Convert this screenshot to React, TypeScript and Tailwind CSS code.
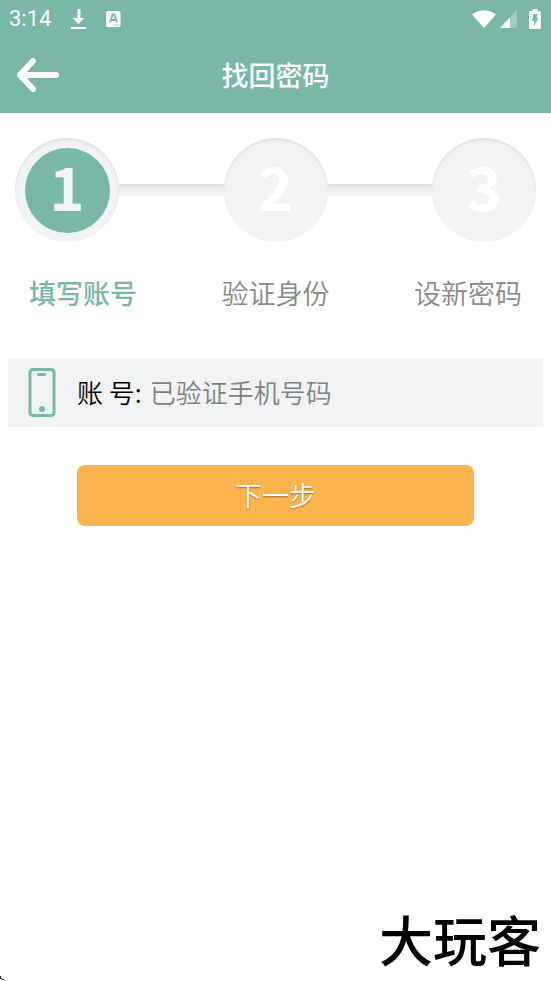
import React from "react";

const steps = [
  { number: 1, label: "填写账号" },
  { number: 2, label: "验证身份" },
  { number: 3, label: "设新密码" },
];

function StatusBar() {
  return (
    <div className="flex h-[38px] items-center justify-between pr-[10px] pl-[9px] text-white">
      <div className="flex items-center">
        <span className="w-[61px] font-[Roboto,sans-serif] text-[22px] leading-[38px]">3:14</span>
        <svg className="h-6 w-[18px]" viewBox="0 0 18 24" fill="currentColor" aria-hidden="true">
          <path d="M7.500 2h3v9h4l-6 6-6-6h5zM1 20h15v2H1z" />
        </svg>
        <svg className="ml-[18px] h-4 w-[15px]" viewBox="0 0 15 16" aria-hidden="true">
          <rect width="14.5" height="16" rx="1.5" fill="white" />
          <path d="M4 11.5 6.6 3.5h1.8L11 11.5M5 9h5" fill="none" stroke="#78b7a6" strokeWidth="1.8" />
          <path d="M7.5 14h6" stroke="#78b7a6" strokeWidth="1.2" strokeDasharray="1.5 1" />
        </svg>
      </div>
      <div className="flex items-center">
        <svg className="h-[19px] w-6" viewBox="0 0 24 19" fill="currentColor" aria-hidden="true">
          <path d="M0 4.500Q12-4 24 4.500L12 18z" />
        </svg>
        <svg className="ml-1 h-[18px] w-[17px]" viewBox="0 0 17 18" fill="currentColor" aria-hidden="true">
          <path d="M0 18 17 0v18z" opacity="0.3" />
          <path d="M0 18 10 7.4V18z" />
        </svg>
        <svg className="ml-3 h-5 w-3" viewBox="0 0 12 20" aria-hidden="true">
          <path d="M3.5 0h5v2H11q1 0 1 1v16q0 1-1 1H1q-1 0-1-1V3q0-1 1-1h2.500z" fill="white" />
          <path d="M4.500 5h4L7.500 9H9.500L4.500 17.500 5.500 12H3z" fill="#78b7a6" />
        </svg>
      </div>
    </div>
  );
}

function Header() {
  return (
    <header className="h-[113px] bg-[#78b7a6]">
      <StatusBar />
      <div className="grid h-[73px] grid-cols-[1fr_auto_1fr] items-center">
        <button type="button" aria-label="返回" className="ml-4 w-11 text-white">
          <svg className="h-9 w-11" viewBox="0 0 44 36" fill="none" stroke="currentColor" strokeWidth="6" strokeLinecap="round" strokeLinejoin="round" aria-hidden="true">
            <path d="M17 4 4 18l13 14M4 18h36" />
          </svg>
        </button>
        <h1 className="text-[27px] leading-10 font-medium text-white">找回密码</h1>
      </div>
    </header>
  );
}

function Steps() {
  return (
    <section>
      <div className="mt-[25px] flex items-center px-[15px]">
        {steps.map(({ number }, i) => (
          <React.Fragment key={number}>
            {i > 0 && (
              <div className="h-3 flex-1 bg-[#f1f3f5] shadow-[inset_0_3px_2px_#e0e2e4]" />
            )}
            <div className="flex size-[104px] shrink-0 items-center justify-center rounded-full bg-[#f1f3f5] shadow-[inset_0_2px_3px_#dedfe1]">
              <div
                className={
                  "flex size-[85px] items-center justify-center rounded-full pb-[10px] text-[60px] leading-none font-bold " +
                  (i === 0 ? "bg-[#78b7a6] text-[#f1f3f5]" : "text-white")
                }
              >
                {number}
              </div>
            </div>
          </React.Fragment>
        ))}
      </div>
      <div className="mt-8 flex justify-between px-[29px] text-[27px] leading-[38px] text-[#888888]">
        {steps.map(({ number, label }, i) => (
          <span key={number} className={i === 0 ? "font-medium text-[#78b7a6]" : "font-[350]"}>
            {label}
          </span>
        ))}
      </div>
    </section>
  );
}

function PhoneIcon() {
  return (
    <svg className="h-[49px] w-7 shrink-0" viewBox="0 0 28 49" fill="none" stroke="#78b7a6" strokeWidth="3" strokeLinecap="round" aria-hidden="true">
      <rect x="2" y="1.500" width="24" height="46" rx="3" />
      <path d="M10.500 6.500h6" />
      <circle cx="14" cy="41" r="3" fill="#78b7a6" stroke="none" />
    </svg>
  );
}

export default function App() {
  return (
    <div className="relative flex min-h-screen flex-col bg-white font-['Noto_Sans_CJK_SC',sans-serif]">
      <Header />
      <Steps />
      <form onSubmit={(e) => e.preventDefault()}>
        <div className="mx-2 mt-[46px] flex h-[69px] items-center bg-[#f1f3f5] pl-5 text-[26px]">
          <PhoneIcon />
          <label htmlFor="account" className="ml-[21px] shrink-0 pb-[2px] font-[350] text-black">
            账 号:
          </label>
          <input
            id="account"
            type="text"
            placeholder="已验证手机号码"
            className="ml-2 h-full min-w-0 flex-1 bg-transparent pb-[2px] font-[350] outline-none placeholder:text-[#808080]"
          />
        </div>
        <div className="mt-[38px] px-[77px]">
          <button
            type="submit"
            className="h-[61px] w-full rounded-lg bg-[#fdb44e] text-[27px] font-[350] text-white [text-shadow:0_1px_2px_#00000066]"
          >
            下一步
          </button>
        </div>
      </form>
      <footer className="mt-auto flex items-end justify-end pr-[10px] text-black">
        <p className="text-[54px] leading-[84px] font-medium">大玩客</p>
      </footer>
      <svg className="absolute bottom-0 left-0 h-[6px] w-1" viewBox="0 0 4 6" aria-hidden="true">
        <path d="M0 1h1v2h1v1h2v1H2V4H0z" fill="#222222" />
      </svg>
    </div>
  );
}
